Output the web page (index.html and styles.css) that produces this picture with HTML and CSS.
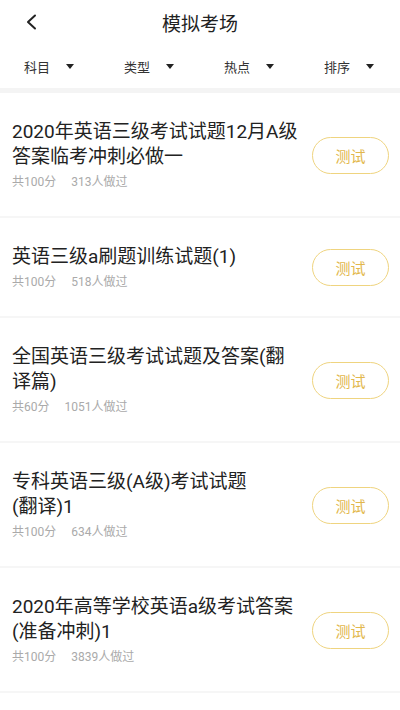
FILE: index.html
```html
<!DOCTYPE html>
<html lang="zh-CN">
<head>
  <meta charset="UTF-8" />
  <meta name="viewport" content="width=device-width, initial-scale=1.0" />
  <title>模拟考场</title>
  <link rel="stylesheet" href="styles.css">
</head>
<body>
  <header class="topbar">
    <a href="#" class="back-btn">
      <svg width="12" height="16" viewBox="0 0 12 16">
        <path d="M10 1.5 L3 8 L10 14.5" fill="none" stroke="#222" stroke-width="2" stroke-linecap="round" stroke-linejoin="round" />
      </svg>
    </a>
    <h1 class="page-title">模拟考场</h1>
    <span></span>
  </header>

  <nav class="filters">
    <div class="filter">科目 <span class="caret"></span></div>
    <div class="filter">类型 <span class="caret"></span></div>
    <div class="filter">热点 <span class="caret"></span></div>
    <div class="filter">排序 <span class="caret"></span></div>
  </nav>

  <main class="exam-list">
    <div class="exam-item">
      <div class="exam-info">
        <div class="exam-title">2020年英语三级考试试题12月A级答案临考冲刺必做一</div>
        <div class="exam-meta"><span>共100分</span><span>313人做过</span></div>
      </div>
      <button class="test-btn">测试</button>
    </div>

    <div class="exam-item">
      <div class="exam-info">
        <div class="exam-title">英语三级a刷题训练试题(1)</div>
        <div class="exam-meta"><span>共100分</span><span>518人做过</span></div>
      </div>
      <button class="test-btn">测试</button>
    </div>

    <div class="exam-item">
      <div class="exam-info">
        <div class="exam-title">全国英语三级考试试题及答案(翻译篇)</div>
        <div class="exam-meta"><span>共60分</span><span>1051人做过</span></div>
      </div>
      <button class="test-btn">测试</button>
    </div>

    <div class="exam-item">
      <div class="exam-info">
        <div class="exam-title">专科英语三级(A级)考试试题(翻译)1</div>
        <div class="exam-meta"><span>共100分</span><span>634人做过</span></div>
      </div>
      <button class="test-btn">测试</button>
    </div>

    <div class="exam-item">
      <div class="exam-info">
        <div class="exam-title">2020年高等学校英语a级考试答案(准备冲刺)1</div>
        <div class="exam-meta"><span>共100分</span><span>3839人做过</span></div>
      </div>
      <button class="test-btn">测试</button>
    </div>
  </main>
</body>
</html>
```

FILE: styles.css
```css
body {
  margin: 0;
  background-color: white;
  color: #222;
  font-family: Roboto, "Noto Sans CJK SC", sans-serif;
}

.topbar {
  height: 44px;
  display: grid;
  grid-template-columns: 1fr auto 1fr;
  align-items: center;
}

.back-btn {
  padding-left: 25px;
  display: flex;
  align-items: center;
}

.page-title {
  margin: 0;
  font-size: 19px;
  font-weight: normal;
  color: #222;
}

.filters {
  height: 44px;
  display: grid;
  grid-template-columns: repeat(4, 1fr);
  align-items: center;
}

.filter {
  padding-left: 24px;
  display: flex;
  align-items: center;
  gap: 16px;
  font-size: 13px;
  color: #333;
}

.caret {
  width: 0;
  height: 0;
  border-left: 4.5px solid transparent;
  border-right: 4.5px solid transparent;
  border-top: 5px solid #222;
}

.exam-list {
  border-top: 5px solid #f4f4f4;
}

.exam-item {
  display: flex;
  align-items: center;
  padding: 26px 11px 25px 12px;
  border-bottom: 2px solid #f6f6f6;
}

.exam-info {
  flex: 1;
  padding-right: 12px;
}

.exam-title {
  font-size: 19px;
  line-height: 25px;
  color: #222;
  text-wrap: pretty;
}

.exam-meta {
  margin-top: 5px;
  display: flex;
  gap: 15px;
  font-size: 12px;
  line-height: 17px;
  color: #aaa;
}

.test-btn {
  width: 77px;
  height: 37px;
  flex-shrink: 0;
  background: white;
  border: 1.5px solid #efd47f;
  border-radius: 19px;
  color: #e2b74c;
  font-family: inherit;
  font-size: 15px;
}
```
